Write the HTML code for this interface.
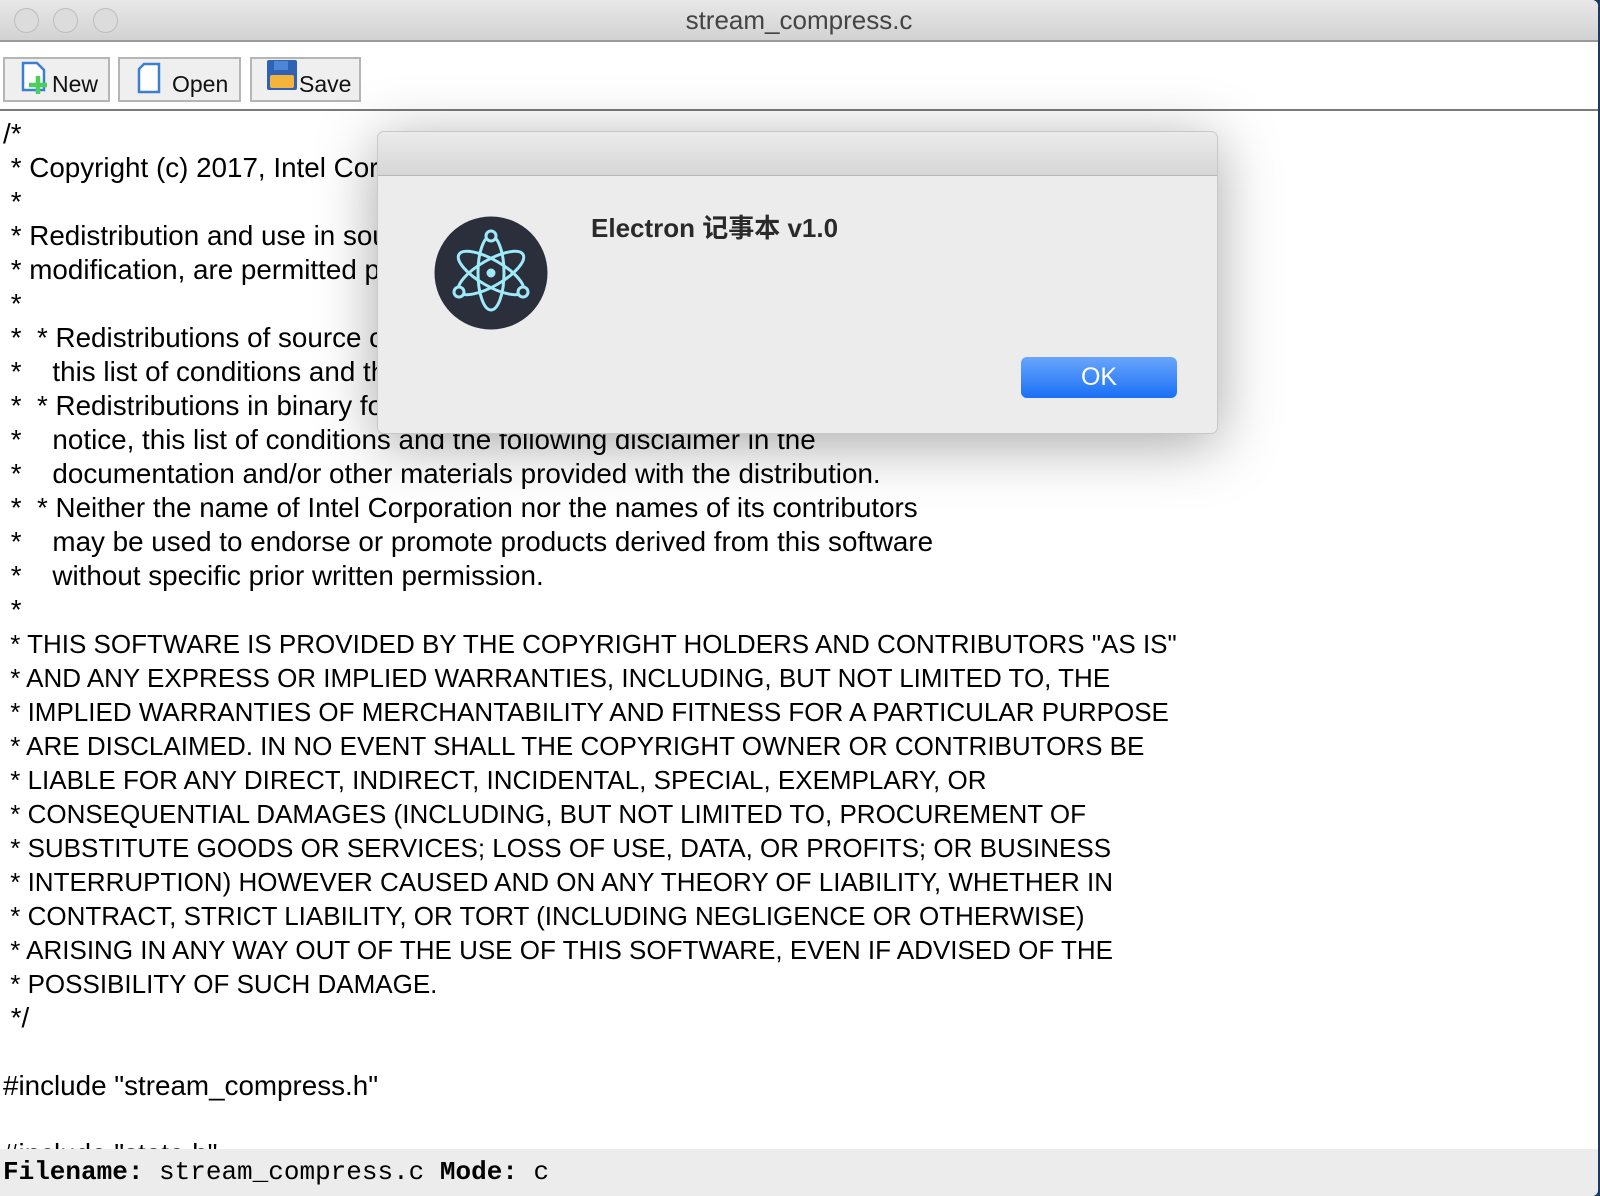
<!DOCTYPE html>
<html><head><meta charset="utf-8"><style>
*{margin:0;padding:0;box-sizing:border-box}
html,body{width:1600px;height:1196px;overflow:hidden;background:#1d3a63}
#win{position:absolute;left:0;top:0;width:1598px;height:1196px;background:#fff;border-radius:0 6px 6px 0;overflow:hidden}
#title{position:absolute;left:0;top:0;width:100%;height:42px;background:linear-gradient(#e8e8e8,#d2d2d2);border-bottom:2px solid #9a9a9a;text-align:center;font:26px/40px "Liberation Sans",sans-serif;color:#444}
.tl{position:absolute;top:8px;width:25px;height:25px;border-radius:50%;background:#dcdcdc;border:1px solid #bdbdbd}
#tb{position:absolute;top:42px;left:0;width:100%;height:69px;border-bottom:2px solid #7a7a7a;background:#fff}
.btn{position:absolute;top:15px;height:45px;background:#efefef;border:2px solid #b5b5b5;font:23px "Liberation Sans",sans-serif;color:#111}
.btn span{position:absolute;top:12px}
pre{position:absolute;left:3px;top:117px;font:27.8px/34px "Liberation Sans",sans-serif;color:#000;white-space:pre}
pre .u{font-size:26px}
#status{position:absolute;left:0;top:1149px;width:100%;height:47px;background:#ececec;font:26px/47px "Liberation Mono",monospace;color:#000;padding-left:3px;white-space:pre}
#dlg{position:absolute;left:377px;top:131px;width:841px;height:303px;background:#ececec;border:1px solid #c8c8c8;border-radius:7px;box-shadow:0 10px 60px rgba(0,0,0,.35);overflow:hidden}
#dh{height:44px;background:linear-gradient(#ebebeb,#d6d6d6);border-bottom:1px solid #b8b8b8}
#dt{position:absolute;left:213px;top:76px;font:bold 26px "Liberation Sans","Noto Sans CJK SC",sans-serif;color:#2a2a2a}
#ok{position:absolute;left:643px;top:225px;width:156px;height:41px;border-radius:6px;background:linear-gradient(#69a6fb,#1a6ff7);color:#fff;font:25px/41px "Liberation Sans",sans-serif;text-align:center}
</style></head><body>
<div id="win">
<div id="title">stream_compress.c
<div class="tl" style="left:14px"></div><div class="tl" style="left:53px"></div><div class="tl" style="left:93px"></div></div>
<div id="tb">
<div class="btn" style="left:3px;width:107px"><svg style="position:absolute;left:13px;top:1px" width="36" height="36" viewBox="0 0 36 36"><path d="M5 3h14l7 7v20H5z" fill="#fff" stroke="#3b7fcf" stroke-width="2.5"/><path d="M20 16v18M11 25h18" stroke="#4ccf5a" stroke-width="4.5"/></svg><span style="left:47px">New</span></div>
<div class="btn" style="left:118px;width:123px"><svg style="position:absolute;left:16px;top:2px" width="30" height="34" viewBox="0 0 30 34"><path d="M8 3h15v28H3V8z" fill="#fff" stroke="#3b7fcf" stroke-width="2.5"/></svg><span style="left:52px">Open</span></div>
<div class="btn" style="left:250px;width:111px"><svg style="position:absolute;left:14px;top:0" width="32" height="34" viewBox="0 0 32 34"><rect x="1" y="1" width="30" height="30" rx="2" fill="#2f62b5"/><rect x="4" y="16" width="24" height="13" rx="2" fill="#f4b33a"/><rect x="8" y="2" width="14" height="9" fill="#4d86d6"/></svg><span style="left:47px">Save</span></div>
</div>
<pre>/*
 * Copyright (c) 2017, Intel Corporation
 *
 * Redistribution and use in source and binary forms, with or without
 * modification, are permitted provided that the following conditions are met:
 *
 *  * Redistributions of source code must retain the above copyright notice,
 *    this list of conditions and the following disclaimer.
 *  * Redistributions in binary form must reproduce the above copyright
 *    notice, this list of conditions and the following disclaimer in the
 *    documentation and/or other materials provided with the distribution.
 *  * Neither the name of Intel Corporation nor the names of its contributors
 *    may be used to endorse or promote products derived from this software
 *    without specific prior written permission.
 *
<span class="u"> * THIS SOFTWARE IS PROVIDED BY THE COPYRIGHT HOLDERS AND CONTRIBUTORS "AS IS"
 * AND ANY EXPRESS OR IMPLIED WARRANTIES, INCLUDING, BUT NOT LIMITED TO, THE
 * IMPLIED WARRANTIES OF MERCHANTABILITY AND FITNESS FOR A PARTICULAR PURPOSE
 * ARE DISCLAIMED. IN NO EVENT SHALL THE COPYRIGHT OWNER OR CONTRIBUTORS BE
 * LIABLE FOR ANY DIRECT, INDIRECT, INCIDENTAL, SPECIAL, EXEMPLARY, OR
 * CONSEQUENTIAL DAMAGES (INCLUDING, BUT NOT LIMITED TO, PROCUREMENT OF
 * SUBSTITUTE GOODS OR SERVICES; LOSS OF USE, DATA, OR PROFITS; OR BUSINESS
 * INTERRUPTION) HOWEVER CAUSED AND ON ANY THEORY OF LIABILITY, WHETHER IN
 * CONTRACT, STRICT LIABILITY, OR TORT (INCLUDING NEGLIGENCE OR OTHERWISE)
 * ARISING IN ANY WAY OUT OF THE USE OF THIS SOFTWARE, EVEN IF ADVISED OF THE
 * POSSIBILITY OF SUCH DAMAGE.</span>
 */

#include "stream_compress.h"

#include "state.h"</pre>
<div id="status"><b>Filename:</b> stream_compress.c <b>Mode:</b> c</div>
<div id="dlg"><div id="dh"></div>
<svg style="position:absolute;left:56px;top:84px" width="114" height="114" viewBox="0 0 114 114">
<circle cx="57" cy="57" r="56.5" fill="#2b2e3b"/>
<g fill="none" stroke="#9feaf9" stroke-width="3" stroke-linecap="round">
<ellipse cx="57" cy="57" rx="37" ry="13" transform="rotate(90 57 57)"/>
<ellipse cx="57" cy="57" rx="37" ry="13" transform="rotate(30 57 57)"/>
<ellipse cx="57" cy="57" rx="37" ry="13" transform="rotate(-30 57 57)"/>
</g>
<g fill="#2b2e3b" stroke="#9feaf9" stroke-width="3">
<circle cx="57" cy="20" r="5"/><circle cx="25" cy="76" r="5"/><circle cx="89" cy="76" r="5"/>
</g><circle cx="57" cy="57" r="4.5" fill="#9feaf9"/></svg>
<div id="dt">Electron 记事本 v1.0</div>
<div id="ok">OK</div>
</div>
</div>
</body></html>
